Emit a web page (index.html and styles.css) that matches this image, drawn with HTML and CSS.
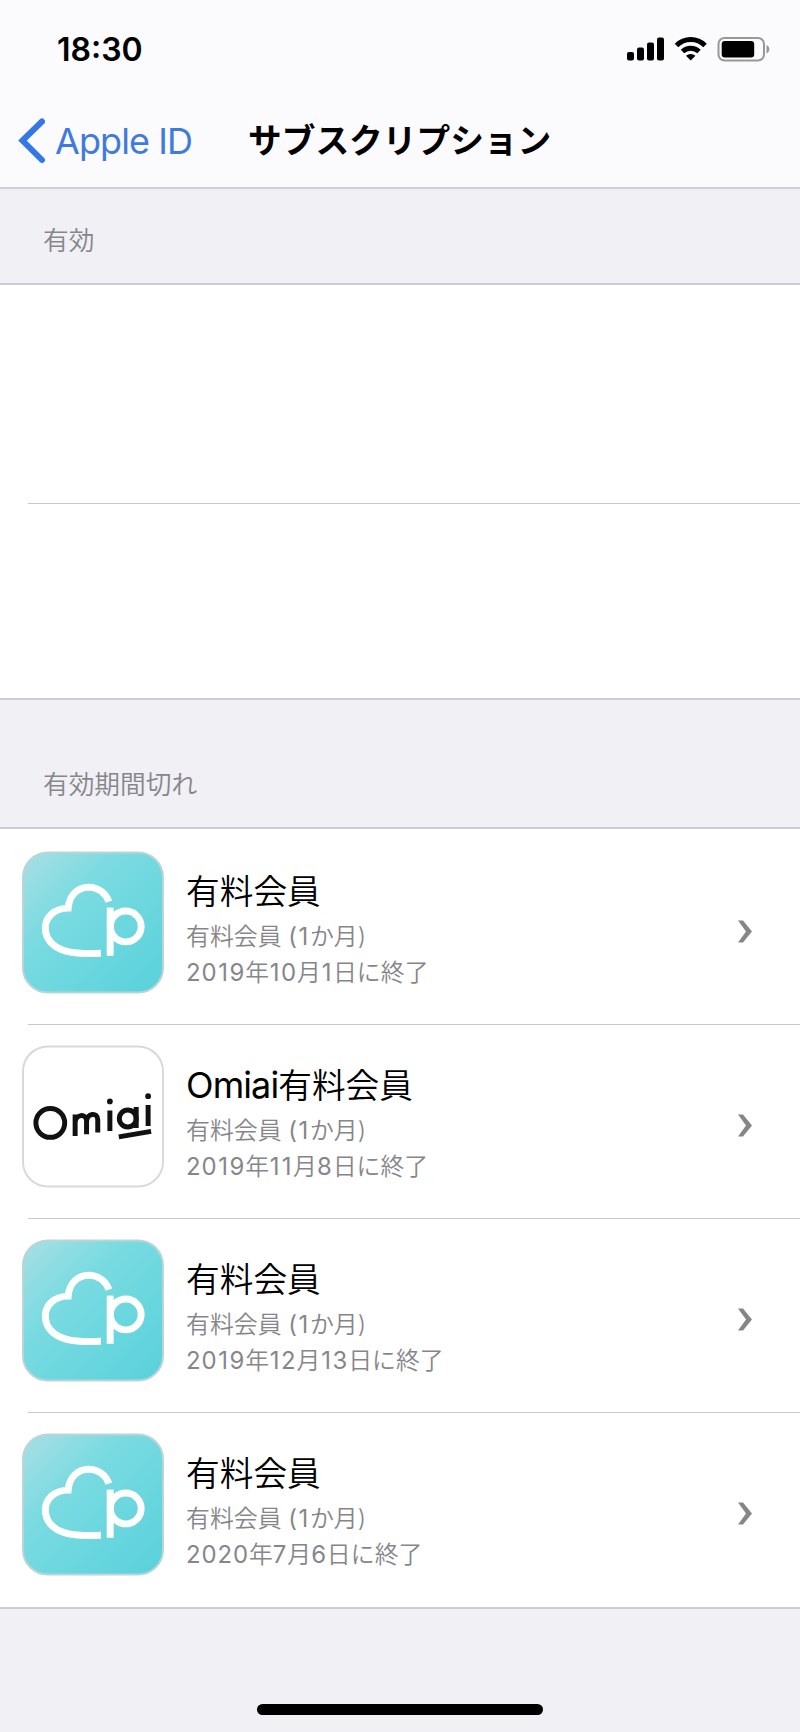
FILE: index.html
```html
<!DOCTYPE html>
<html lang="ja">
<head>
<meta charset="utf-8">
<title>サブスクリプション</title>
<link rel="stylesheet" href="styles.css">
</head>
<body>
<svg width="0" height="0" class="defs" aria-hidden="true">
  <defs>
    <linearGradient id="teal" x1="0" y1="0" x2="1" y2="1">
      <stop offset="0" stop-color="#a9dfe4"/>
      <stop offset=".35" stop-color="#7adbe1"/>
      <stop offset="1" stop-color="#58d1db"/>
    </linearGradient>
    <symbol id="cloud" viewBox="0 0 143 143">
      <rect x="1" y="1" width="141" height="141" rx="25" fill="url(#teal)" stroke="#b9d5d8" stroke-width="2"/>
      <g fill="none" stroke="#fff" stroke-width="7">
        <path d="M79.500 102.500C66 103 55 103 45 100.500C31 97 23.500 88 23.500 77C23.500 66 33 57 46.500 57C47.500 44 56 36 67 36C77 36 84.500 42 87.500 50.500"/>
        <path d="M88.800 56.500V105"/>
        <circle cx="104.500" cy="75.500" r="15.500"/>
      </g>
    </symbol>
    <symbol id="omiai" viewBox="0 0 143 143">
      <rect x="1" y="1" width="141" height="141" rx="25" fill="#fff" stroke="#d9d9d9" stroke-width="2"/>
      <g fill="none" stroke="#111" stroke-width="5">
        <circle cx="28.500" cy="78" r="14.500"/>
        <path d="M53.500 91.200V69.500M53.500 78C53.500 69 65 68 65 76V89.500M65 77C65 68 76.300 66.500 76.300 75V87.500"/>
        <path d="M88.500 86V65.500M127 81V60M115 83.200V62"/>
        <circle cx="106.500" cy="73.500" r="8.500"/>
        <path d="M97.500 92L130 86.500"/>
      </g>
      <circle cx="88.500" cy="56.300" r="2.900" fill="#111"/>
      <circle cx="127" cy="51" r="2.900" fill="#111"/>
    </symbol>
    <symbol id="chevron" viewBox="0 0 14 23">
      <path d="M0 .5H5L14 11.500L5 22.500H0L8 11.500Z" fill="#868686"/>
    </symbol>
  </defs>
</svg>
<header class="header">
  <div class="status">
    <span class="time">18:30</span>
    <svg class="indicators" viewBox="0 0 144 26" width="144" height="26">
      <rect x="0" y="15" width="7" height="8.500" rx="2"/>
      <rect x="10" y="10.500" width="7" height="13" rx="2"/>
      <rect x="20" y="5.500" width="7" height="18" rx="2"/>
      <rect x="30" y="0.500" width="7" height="23" rx="2"/>
      <g fill="none" stroke="#000" stroke-width="5">
        <path d="M49.500 8.500A20 20 0 0 1 78 8.500"/>
        <path d="M55.500 14.500A12 12 0 0 1 72 14.500"/>
      </g>
      <path d="M63.700 23.500L59 18.700A7 7 0 0 1 68.400 18.700Z"/>
      <rect x="91.500" y="1" width="45.500" height="22.500" rx="6" fill="none" stroke="#98989a" stroke-width="2"/>
      <rect x="94.700" y="4" width="32.500" height="16.500" rx="3.200"/>
      <path d="M139.500 8C143.300 9.500 143.300 15 139.500 16.500Z" fill="#98989a"/>
    </svg>
  </div>
  <nav class="nav">
    <a class="back">
      <svg viewBox="0 0 27 46" width="27" height="46"><path d="M24 3.500L4.500 22.500L24 42" fill="none" stroke="#3478e5" stroke-width="6" stroke-linecap="round" stroke-linejoin="miter"/></svg>
      <span>Apple ID</span>
    </a>
    <h1 class="title">サブスクリプション</h1>
  </nav>
</header>
<main>
  <h2 class="section section-active">有効</h2>
  <div class="blank-list">
    <div class="blank blank-first"></div>
    <div class="blank"></div>
  </div>
  <h2 class="section section-expired">有効期間切れ</h2>
  <ul class="list">
    <li class="row">
      <svg class="app"><use href="#cloud"/></svg>
      <div class="info"><p class="name">有料会員</p><p class="detail plan">有料会員 <span class="num">(<span class="one">1</span></span>か月)</p><p class="detail"><span class="num">20<span class="one">1</span>9</span>年<span class="num"><span class="one">1</span>0</span>月<span class="num one">1</span>日に終了</p></div>
      <svg class="chevron"><use href="#chevron"/></svg>
    </li>
    <li class="row">
      <svg class="app"><use href="#omiai"/></svg>
      <div class="info"><p class="name"><span class="latin">Omiai</span>有料会員</p><p class="detail plan">有料会員 <span class="num">(<span class="one">1</span></span>か月)</p><p class="detail"><span class="num">20<span class="one">1</span>9</span>年<span class="num one">1</span><span class="num one">1</span>月<span class="num">8</span>日に終了</p></div>
      <svg class="chevron"><use href="#chevron"/></svg>
    </li>
    <li class="row">
      <svg class="app"><use href="#cloud"/></svg>
      <div class="info"><p class="name">有料会員</p><p class="detail plan">有料会員 <span class="num">(<span class="one">1</span></span>か月)</p><p class="detail"><span class="num">20<span class="one">1</span>9</span>年<span class="num"><span class="one">1</span>2</span>月<span class="num"><span class="one">1</span>3</span>日に終了</p></div>
      <svg class="chevron"><use href="#chevron"/></svg>
    </li>
    <li class="row">
      <svg class="app"><use href="#cloud"/></svg>
      <div class="info"><p class="name">有料会員</p><p class="detail plan">有料会員 <span class="num">(<span class="one">1</span></span>か月)</p><p class="detail"><span class="num">2020</span>年<span class="num">7</span>月<span class="num">6</span>日に終了</p></div>
      <svg class="chevron"><use href="#chevron"/></svg>
    </li>
  </ul>
</main>
<footer class="footer"><div class="home"></div></footer>
</body>
</html>
```

FILE: styles.css
```css
* { box-sizing: border-box; margin: 0; padding: 0; }
body {
  width: 800px;
  height: 1732px;
  display: flex;
  flex-direction: column;
  overflow: hidden;
  background: #f0f0f5;
  color: #000;
  font-family: Inter, "Noto Sans CJK JP", sans-serif;
}
.defs { position: absolute; }
.header { height: 189px; background: #fbfbfd; border-bottom: 2px solid #d0d0d3; }
.status {
  height: 96px;
  padding: 0 30px 0 57px;
  display: flex;
  align-items: center;
  justify-content: space-between;
}
.time { font-size: 32px; font-weight: 600; line-height: 40px; padding-top: 4px; }
.indicators { margin: 3px -1px 0 0; }
.nav { height: 91px; display: flex; align-items: center; padding: 0 0 1px 18px; }
.back { width: 230px; display: flex; align-items: center; gap: 10px; color: #3f7bdc; font-size: 36px; font-weight: 400; line-height: 46px; white-space: nowrap; letter-spacing: -0.9px; }
.title { font-size: 33.700px; font-weight: 700; line-height: 46px; white-space: nowrap; }
.section {
  display: flex;
  align-items: flex-end;
  padding-left: 43px;
  color: #86868b;
  font-size: 25.700px;
  font-weight: 350;
  line-height: 36px;
  border-bottom: 2px solid #cdcdd0;
}
.section-active { height: 96px; padding-bottom: 24px; }
.section-expired { height: 129px; padding-bottom: 24px; }
.blank-list { height: 415px; background: #fff; border-bottom: 2px solid #cdcdd0; }
.blank { margin-left: 28px; }
.blank-first { height: 219px; border-bottom: 1px solid #c8c8c8; }
.list { list-style: none; height: 780px; padding-top: 2px; background: #fff; border-bottom: 2px solid #cdcdd0; }
.row { height: 194px; margin-left: 28px; display: flex; align-items: flex-start; border-bottom: 1px solid #c8c8c8; }
.row:last-child { border-bottom: 0; }
.app { width: 142px; height: 143px; margin: 20px 0 0 -6px; flex: none; }
.info { flex: 1; padding: 38px 0 0 22px; white-space: nowrap; }
.name { font-size: 33.700px; font-weight: 350; line-height: 46px; }
.latin { font-size: 36px; font-weight: 400; line-height: 1; letter-spacing: -0.9px; }
.detail { color: #86868a; font-size: 23.900px; font-weight: 350; line-height: 36px; }
.num { font-weight: 400; letter-spacing: 0.9px; }
.one { margin: 0 0.700px; }
.plan { padding-top: 4px; height: 40px; }
.chevron { width: 14px; height: 23px; margin: 89px 48px 0 0; flex: none; }
.footer { flex: 1; display: flex; justify-content: center; align-items: flex-end; padding-bottom: 17px; }
.home { width: 286px; height: 11px; border-radius: 6px; background: #000; }
```
